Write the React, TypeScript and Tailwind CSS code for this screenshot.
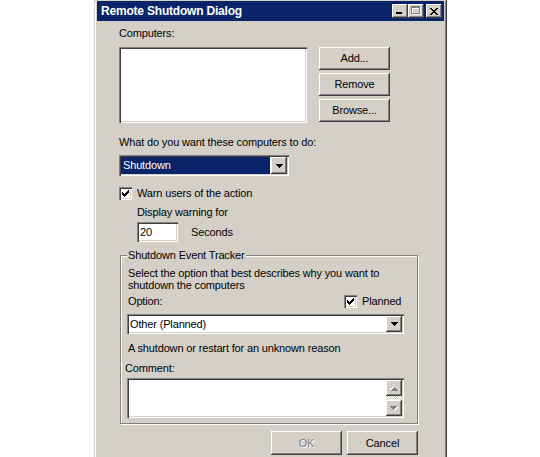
const raised =
  "bg-[#d4d0c8] shadow-[inset_-1px_-1px_#404040,inset_1px_1px_#ffffff,inset_-2px_-2px_#808080,inset_2px_2px_#d4d0c8]";
const sunken =
  "shadow-[inset_1px_1px_#808080,inset_2px_2px_#404040,inset_-1px_-1px_#ffffff,inset_-2px_-2px_#d4d0c8]";

function Check() {
  return (
    <svg width="7" height="7" viewBox="0 0 7 7" shapeRendering="crispEdges">
      <path d="M6 0h1v3h-1v1h-1v1h-1v1h-1v1h-1v-1h-1v-1h-1v-3h1v1h1v1h1v-1h1v-1h1v-1h1z" fill="#000" />
    </svg>
  );
}

function CheckBox({ label }: { label: string }) {
  return (
    <div className="flex items-center h-[13px]">
      <div className={`w-[13px] h-[13px] bg-white flex items-center justify-center ${sunken}`}>
        <Check />
      </div>
      <span className="ml-[5px] leading-[13px]">{label}</span>
    </div>
  );
}

function ArrowDown({ color = "#000" }: { color?: string }) {
  return (
    <svg width="7" height="4" viewBox="0 0 7 4" shapeRendering="crispEdges">
      <path d="M0 0h7v1h-1v1h-1v1h-1v1h-1v-1h-1v-1h-1v-1h-1z" fill={color} />
    </svg>
  );
}

function DropButton() {
  return (
    <div className={`w-[16px] h-[17px] flex items-center justify-center ${raised}`}>
      <ArrowDown />
    </div>
  );
}

function Button({ label, disabled, w = "w-[71px]", h = "h-[23px]" }: { label: string; disabled?: boolean; w?: string; h?: string }) {
  return (
    <div
      className={`${w} ${h} flex items-center justify-center ${raised} ${
        disabled ? "text-[#808080] [text-shadow:1px_1px_0_#ffffff]" : "text-black"
      }`}
    >
      {label}
    </div>
  );
}

function ScrollArrow({ up }: { up?: boolean }) {
  return (
    <div className={`w-[16px] h-[16px] flex items-center justify-center ${raised}`}>
      <svg width="8" height="5" viewBox="0 0 8 5" shapeRendering="crispEdges" className={up ? "rotate-180" : ""}>
        <path d="M1 1h7v1h-1v1h-1v1h-1v1h-1v-1h-1v-1h-1v-1h-1z" fill="#ffffff" />
        <path d="M0 0h7v1h-1v1h-1v1h-1v1h-1v-1h-1v-1h-1v-1h-1z" fill="#808080" />
      </svg>
    </div>
  );
}

export default function App() {
  return (
    <div className="w-[540px] h-[457px] overflow-hidden bg-white font-['Liberation_Sans',Arial,sans-serif] text-[11px] tracking-[-0.15px] text-black">
      <div
        className={`ml-[94px] w-[353px] h-[470px] pt-[1px] px-[3px] bg-[#d4d0c8] shadow-[inset_-1px_-1px_#404040,inset_1px_1px_#d4d0c8,inset_-2px_-2px_#808080,inset_2px_2px_#ffffff]`}
      >
        {/* title bar */}
        <div className="h-[20px] bg-[#0a246a] flex items-center pl-[4px] pr-[2px]">
          <span className="text-white font-bold text-[12px] tracking-[-0.2px] leading-[14px]">Remote Shutdown Dialog</span>
          <div className="ml-auto flex items-center">
            <div className={`w-[16px] h-[14px] relative ${raised}`}>
              <div className="absolute left-[4px] top-[8px] w-[6px] h-[2px] bg-black" />
            </div>
            <div className={`w-[16px] h-[14px] relative ${raised}`}>
              <div className="absolute left-[4px] top-[3px] w-[9px] h-[8px] border border-t-2 border-white" />
              <div className="absolute left-[3px] top-[2px] w-[9px] h-[8px] border border-t-2 border-[#808080]" />
            </div>
            <div className={`ml-[2px] w-[16px] h-[14px] flex items-center justify-center ${raised}`}>
              <svg width="8" height="7" viewBox="0 0 8 7" shapeRendering="crispEdges">
                <path d="M0 0h2v1h1v1h2v-1h1v-1h2v1h-1v1h-1v1h-1v1h1v1h1v1h1v1h-2v-1h-1v-1h-2v1h-1v1h-2v-1h1v-1h1v-1h1v-1h-1v-1h-1v-1h-1z" fill="#000" />
              </svg>
            </div>
          </div>
        </div>

        {/* client */}
        <div className="pl-[22px]">
          <div className="mt-[6px] h-[13px] leading-[13px]">Computers:</div>
          <div className="mt-[7px] flex">
            <div className={`w-[188px] h-[76px] bg-white ${sunken}`} />
            <div className="ml-[12px] flex flex-col gap-[3px]">
              <Button label="Add..." />
              <Button label="Remove" />
              <Button label="Browse..." />
            </div>
          </div>

          <div className="mt-[13px] h-[13px] leading-[13px]">What do you want these computers to do:</div>
          <div className={`mt-[6px] w-[170px] h-[21px] bg-white p-[2px] flex ${sunken}`}>
            <div className="flex-1 bg-[#0a246a] text-white pl-[2px] leading-[17px] mr-[1px]">Shutdown</div>
            <DropButton />
          </div>

          <div className="mt-[11px]">
            <CheckBox label="Warn users of the action" />
          </div>
          <div className="ml-[18px] mt-[6px] h-[13px] leading-[13px]">Display warning for</div>
          <div className="ml-[18px] mt-[3px] flex items-center">
            <div className={`w-[41px] h-[20px] bg-white pl-[3px] leading-[20px] ${sunken}`}>20</div>
            <span className="ml-[13px]">Seconds</span>
          </div>

          {/* group box */}
          <div className="mt-[13px] ml-[1px] w-[298px] relative border border-[#808080] shadow-[1px_1px_0_#ffffff,inset_1px_1px_0_#ffffff] pl-[7px] pt-[11px] pb-[5px]">
            <span className="absolute -top-[7px] left-[6px] px-[1px] bg-[#d4d0c8] leading-[13px]">
              Shutdown Event Tracker
            </span>
            <div className="leading-[12px]">
              Select the option that best describes why you want to
              <br />
              shutdown the computers
            </div>
            <div className="mt-[4px] flex items-center">
              <span className="w-[216px] leading-[13px]">Option:</span>
              <CheckBox label="Planned" />
            </div>
            <div className={`mt-[6px] -ml-[1px] w-[277px] h-[20px] bg-white p-[2px] flex ${sunken}`}>
              <div className="flex-1 pl-[1px] leading-[16px]">Other (Planned)</div>
              <div className={`w-[16px] h-[16px] flex items-center justify-center ${raised}`}>
                <ArrowDown />
              </div>
            </div>
            <div className="mt-[8px] h-[13px] leading-[13px]">A shutdown or restart for an unknown reason</div>
            <div className="mt-[7px] -ml-[3px] h-[13px] leading-[13px]">Comment:</div>
            <div className={`mt-[3px] -ml-[1px] w-[277px] h-[40px] bg-white p-[2px] flex ${sunken}`}>
              <div className="flex-1" />
              <div className="w-[16px] flex flex-col">
                <ScrollArrow up />
                <div className="flex-1 bg-[image:repeating-conic-gradient(#d4d0c8_0_25%,#ffffff_0_50%)] bg-[length:2px_2px]" />
                <ScrollArrow />
              </div>
            </div>
          </div>

          <div className="ml-[1px] w-[298px] mt-[7px] flex justify-end gap-[5px]">
            <Button label="OK" disabled h="h-[24px]" />
            <Button label="Cancel" h="h-[24px]" />
          </div>
        </div>
      </div>
    </div>
  );
}
